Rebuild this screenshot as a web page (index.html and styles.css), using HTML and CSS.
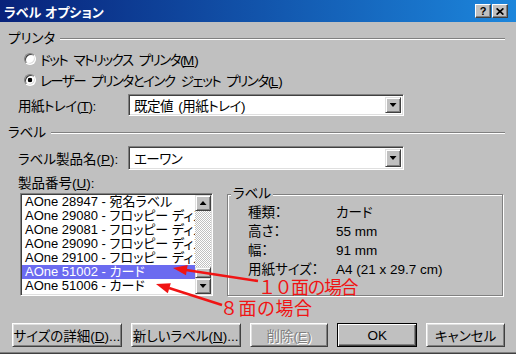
FILE: index.html
```html
<!DOCTYPE html>
<html lang="ja">
<head>
  <meta charset="UTF-8" />
  <meta name="viewport" content="width=device-width, initial-scale=1.0" />
  <title>ラベル オプション</title>
  <link rel="stylesheet" href="styles.css">
</head>
<body>

  <div class="window">

    <div class="titlebar">
      <span class="title">ラベル オプション</span>
      <div class="title-buttons">
        <span class="cap-btn help">?</span>
        <span class="cap-btn close">
          <svg width="8" height="7" viewBox="0 0 8 7">
            <path d="M0.6 0.4 L7.4 6.6 M7.4 0.4 L0.6 6.6" stroke="#000" stroke-width="1.7" />
          </svg>
        </span>
      </div>
    </div>

    <div class="dialog">

      <div class="section-head"><span>プリンタ</span><i class="rule"></i></div>

      <label class="radio-row"><span class="radio"></span><span class="radio-text">ドット マトリックス プリンタ(<u>M</u>)</span></label>
      <label class="radio-row"><span class="radio checked"></span><span class="radio-text">レーザー プリンタとインク ジェット プリンタ(<u>L</u>)</span></label>

      <div class="field-row tray">
        <span class="field-label">用紙トレイ(<u>T</u>):</span>
        <div class="combo">
          <span class="combo-text">既定値 (用紙トレイ)</span>
          <span class="drop-btn"><i class="tri down"></i></span>
        </div>
      </div>

      <div class="section-head label-head"><span>ラベル</span><i class="rule"></i></div>

      <div class="field-row product">
        <span class="field-label">ラベル製品名(<u>P</u>):</span>
        <div class="combo">
          <span class="combo-text">エーワン</span>
          <span class="drop-btn"><i class="tri down"></i></span>
        </div>
      </div>

      <div class="lower">
        <div class="list-col">
          <div class="caption">製品番号(<u>U</u>):</div>
          <div class="listbox">
            <ul class="items">
              <li>AOne 28947 - 宛名ラベル</li>
              <li>AOne 29080 - フロッピー ディスク</li>
              <li>AOne 29081 - フロッピー ディスク</li>
              <li>AOne 29090 - フロッピー ディスク</li>
              <li>AOne 29100 - フロッピー ディスク</li>
              <li class="selected">AOne 51002 - カード</li>
              <li>AOne 51006 - カード</li>
            </ul>
            <div class="scrollbar">
              <span class="sb-btn"><i class="tri up"></i></span>
              <span class="sb-track"></span>
              <span class="sb-thumb"></span>
              <span class="sb-btn"><i class="tri down"></i></span>
            </div>
          </div>
        </div>

        <fieldset class="info">
          <legend>ラベル</legend>
          <dl class="info-grid">
            <dt>種類：</dt><dd>カード</dd>
            <dt>高さ：</dt><dd>55 mm</dd>
            <dt>幅：</dt><dd>91 mm</dd>
            <dt>用紙サイズ：</dt><dd>A4 (21 x 29.7 cm)</dd>
          </dl>
        </fieldset>
      </div>

      <div class="buttons">
        <button class="btn wide">サイズの詳細(<u>D</u>)...</button>
        <button class="btn wide">新しいラベル(<u>N</u>)...</button>
        <button class="btn" disabled>削除(<u>E</u>)</button>
        <button class="btn default">OK</button>
        <button class="btn">キャンセル</button>
      </div>

    </div>

    <!-- red notes drawn over the dialog -->
    <div class="note note-10">１０面の場合</div>
    <div class="note note-8">８面の場合</div>
    <svg class="arrows" width="516" height="354" viewBox="0 0 516 354">
      <line x1="258" y1="281" x2="186" y2="270" stroke="#f01414" stroke-width="2.5" />
      <polygon points="173,268 187.6,265 186,275.2" fill="#f01414" />
      <line x1="222" y1="305" x2="169" y2="288" stroke="#f01414" stroke-width="2.5" />
      <polygon points="156,284 170.8,283.2 167.8,293.2" fill="#f01414" />
    </svg>

  </div>

</body>
</html>
```

FILE: styles.css
```css
body {
  margin: 0;
  font-family: "Liberation Sans", "Noto Sans CJK JP", sans-serif;
  font-size: 13.5px;
  font-feature-settings: "palt";
  text-autospace: no-autospace;
  color: #000;
  background: #c0c0c0;
}

.window {
  position: relative;
  width: 516px;
  height: 354px;
  box-sizing: border-box;
  background: #c0c0c0;
  border-bottom: 1px solid #404040;
  box-shadow: inset 0 -1px #808080;
  overflow: hidden;
}

/* title bar */
.titlebar {
  height: 22px;
  display: flex;
  align-items: center;
  justify-content: space-between;
  padding: 0 8px 0 4px;
  background: linear-gradient(90deg, #08227a, #1c86dc);
}

.title {
  color: #fff;
  font-weight: bold;
  font-size: 13px;
}

.title-buttons {
  display: flex;
  gap: 1px;
}

.cap-btn {
  width: 16px;
  height: 14px;
  box-sizing: border-box;
  display: flex;
  align-items: center;
  justify-content: center;
  background: #c0c0c0;
  border: 1px solid;
  border-color: #fff #404040 #404040 #fff;
  box-shadow: inset -1px -1px #808080;
  font-family: "Liberation Sans", sans-serif;
  font-weight: bold;
  font-size: 11px;
  line-height: 1;
}

/* dialog body */
.dialog {
  padding: 0 11px 0 8px;
}

.section-head {
  display: flex;
  align-items: center;
  height: 16px;
  line-height: 16px;
  margin-top: 9px;
}

.rule {
  flex: 1;
  margin-left: 5px;
  border-top: 1px solid #808080;
  border-bottom: 1px solid #fff;
}

.radio-row {
  display: flex;
  align-items: center;
  gap: 4px;
  height: 18px;
  margin-top: 3px;
  padding-left: 16px;
}

.radio-text {
  letter-spacing: -1.5px;
  word-spacing: 4px;
}

.radio-text u {
  letter-spacing: 0;
}

.radio {
  width: 12px;
  height: 12px;
  box-sizing: border-box;
  border-radius: 50%;
  border: 1px solid;
  border-color: #808080 #fff #fff #808080;
  background: #fff;
  box-shadow: inset 1px 1px #404040, inset -1px -1px #dfdfdf;
}

.radio.checked {
  background: radial-gradient(circle, #000 0 2px, #fff 2.6px);
}

.field-row {
  display: flex;
  align-items: center;
  margin-top: 5px;
  padding-left: 10px;
}

.field-label {
  width: 110px;
}

.tray .field-label {
  letter-spacing: -0.5px;
}

.combo {
  width: 276px;
  height: 22px;
  box-sizing: border-box;
  display: flex;
  align-items: stretch;
  padding: 2px;
  background: #fff;
  border: 1px solid;
  border-color: #808080 #fff #fff #808080;
  box-shadow: inset 1px 1px #404040, inset -1px -1px #dfdfdf;
}

.product .combo {
  height: 24px;
}

.combo-text {
  flex: 1;
  display: flex;
  align-items: center;
  padding-left: 3px;
  letter-spacing: -0.5px;
  word-spacing: 2px;
}

.drop-btn,
.sb-btn,
.sb-thumb {
  display: flex;
  align-items: center;
  justify-content: center;
  box-sizing: border-box;
  background: #c0c0c0;
  border: 1px solid;
  border-color: #dfdfdf #404040 #404040 #dfdfdf;
  box-shadow: inset 1px 1px #fff, inset -1px -1px #808080;
}

.drop-btn {
  width: 16px;
}

.tri {
  display: block;
  width: 7px;
  height: 4px;
  background: #000;
}

.tri.down {
  clip-path: polygon(0 0, 100% 0, 50% 100%);
}

.tri.up {
  clip-path: polygon(50% 0, 100% 100%, 0 100%);
}

/* list + label info */
.lower {
  display: flex;
  margin-top: 6px;
}

.list-col {
  width: 195px;
  padding-left: 10px;
}

.caption {
  height: 16px;
  line-height: 16px;
}

.listbox {
  margin: 1px 0 0 2px;
  width: 193px;
  height: 103px;
  box-sizing: border-box;
  display: flex;
  background: #fff;
  border: 1px solid;
  border-color: #808080 #fff #fff #808080;
  box-shadow: inset 1px 1px #404040, inset -1px -1px #dfdfdf;
  padding: 1px;
}

.items {
  flex: 1;
  margin: 0;
  padding: 0;
  list-style: none;
  overflow: hidden;
  font-size: 13px;
}

.items li {
  height: 14px;
  line-height: 14px;
  padding-left: 3px;
  white-space: nowrap;
}

.items li.selected {
  background: #6b6bf0;
  color: #fff;
}

.scrollbar {
  width: 16px;
  display: flex;
  flex-direction: column;
}

.sb-btn {
  height: 16px;
}

.sb-track {
  flex: 1;
  background: repeating-conic-gradient(#fff 0 25%, #c0c0c0 0 50%) 0 0 / 2px 2px;
}

.sb-thumb {
  height: 11px;
}

.info {
  align-self: flex-end;
  margin: 0 0 0 14px;
  width: 276px;
  height: 110px;
  box-sizing: border-box;
  padding: 0 0 0 3px;
  border: 1px solid #808080;
  box-shadow: inset 1px 1px #fff, 1px 1px #fff;
}

.info legend {
  padding: 0 2px;
  line-height: 16px;
  background: #c0c0c0;
}

.info-grid {
  display: grid;
  grid-template-columns: 88px auto;
  grid-auto-rows: 19px;
  align-items: center;
  line-height: 16px;
  margin: 1px 0 0 17px;
}

.info-grid dt,
.info-grid dd {
  margin: 0;
}

/* bottom buttons */
.buttons {
  display: flex;
  gap: 9px;
  margin-top: 27px;
  padding-left: 4px;
}

.btn {
  width: 79px;
  height: 24px;
  padding: 0;
  font: inherit;
  color: #000;
  background: #c0c0c0;
  border: 1px solid;
  border-color: #fff #404040 #404040 #fff;
  box-shadow: inset 1px 1px #dfdfdf, inset -1px -1px #808080;
}

.btn.wide {
  width: 110px;
}

.btn.default {
  width: 80px;
  border-color: #000;
  box-shadow: inset 1px 1px #fff, inset -1px -1px #404040, inset -2px -2px #808080;
}

.btn:disabled {
  color: #808080;
  text-shadow: 1px 1px #fff;
}

/* red annotations */
.note {
  position: absolute;
  font-family: "Noto Sans CJK JP", sans-serif;
  font-size: 18px;
  font-feature-settings: normal;
  line-height: 18px;
  color: #f01414;
}

.note-10 {
  left: 258px;
  top: 277px;
  letter-spacing: -1.5px;
}

.note-8 {
  left: 220px;
  top: 298px;
  letter-spacing: 0.5px;
}

.arrows {
  position: absolute;
  left: 0;
  top: 0;
  pointer-events: none;
}
```
